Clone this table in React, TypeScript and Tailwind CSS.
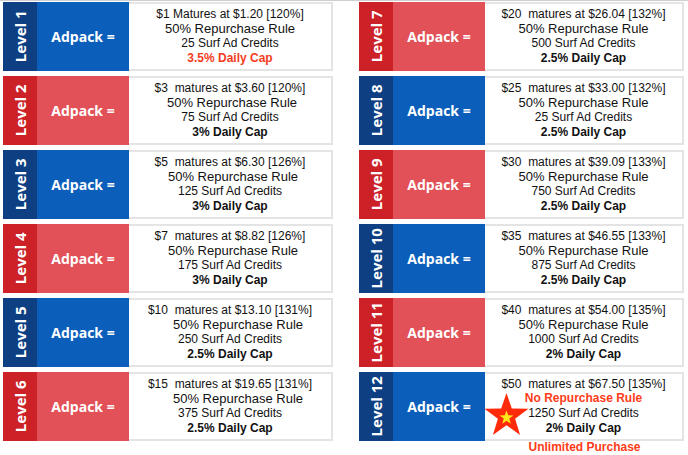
import React from "react";

type Level = {
  level: number;
  price: string;
  rule: string;
  credits: string;
  cap: string;
  capRed?: boolean;
  ruleShift?: string;
};

const left: Level[] = [
  { level: 1, price: "$1 Matures at $1.20 [120%]", rule: "50% Repurchase Rule", credits: "25 Surf Ad Credits", cap: "3.5% Daily Cap", capRed: true },
  { level: 2, price: "$3  matures at $3.60 [120%]", rule: "50% Repurchase Rule", credits: "75 Surf Ad Credits", cap: "3% Daily Cap", ruleShift: "pl-[4px]" },
  { level: 3, price: "$5  matures at $6.30 [126%]", rule: "50% Repurchase Rule", credits: "125 Surf Ad Credits", cap: "3% Daily Cap", ruleShift: "pl-[6px]" },
  { level: 4, price: "$7  matures at $8.82 [126%]", rule: "50% Repurchase Rule", credits: "175 Surf Ad Credits", cap: "3% Daily Cap", ruleShift: "pl-[6px]" },
  { level: 5, price: "$10  matures at $13.10 [131%]", rule: "50% Repurchase Rule", credits: "250 Surf Ad Credits", cap: "2.5% Daily Cap", ruleShift: "pl-[16px]" },
  { level: 6, price: "$15  matures at $19.65 [131%]", rule: "50% Repurchase Rule", credits: "375 Surf Ad Credits", cap: "2.5% Daily Cap", ruleShift: "pl-[16px]" },
];

const right: Level[] = [
  { level: 7, price: "$20  matures at $26.04 [132%]", rule: "50% Repurchase Rule", credits: "500 Surf Ad Credits", cap: "2.5% Daily Cap" },
  { level: 8, price: "$25  matures at $33.00 [132%]", rule: "50% Repurchase Rule", credits: "25 Surf Ad Credits", cap: "2.5% Daily Cap" },
  { level: 9, price: "$30  matures at $39.09 [133%]", rule: "50% Repurchase Rule", credits: "750 Surf Ad Credits", cap: "2.5% Daily Cap" },
  { level: 10, price: "$35  matures at $46.55 [133%]", rule: "50% Repurchase Rule", credits: "875 Surf Ad Credits", cap: "2.5% Daily Cap" },
  { level: 11, price: "$40  matures at $54.00 [135%]", rule: "50% Repurchase Rule", credits: "1000 Surf Ad Credits", cap: "2% Daily Cap" },
];

const Star = () => (
  <svg className="absolute left-[-1px] top-[19px]" width="45" height="43" viewBox="0 0 44 42">
    <polygon
      points="22,0 27.2,15.2 43.5,15.4 30.4,25.2 35.3,41 22,31.4 8.7,41 13.6,25.2 0.5,15.4 16.8,15.2"
      fill="#ff2a0a"
    />
    <polygon
      points="22,17 23.7,21.8 28.8,21.9 24.7,25 26.2,30 22,27 17.8,30 19.3,25 15.2,21.9 20.3,21.8"
      fill="#ffe81a"
    />
  </svg>
);

const Card = ({ item, blue, last }: { item: Level; blue: boolean; last?: boolean }) => (
  <div className="flex h-[69px]">
    <div
      className={`flex w-[34px] shrink-0 items-center justify-center ${blue ? "bg-[#0d3f82]" : "bg-[#cd2128]"}`}
    >
      <span className="-rotate-90 whitespace-nowrap font-['Open_Sans',sans-serif] text-[15px] font-bold text-white">
        Level {item.level}
      </span>
    </div>
    <div
      className={`flex w-[92px] shrink-0 items-center justify-center font-['Open_Sans',sans-serif] text-[14px] font-bold text-white ${blue ? "bg-[#0b5eba]" : "bg-[#e25058]"}`}
    >
      Adpack =
    </div>
    <div className="relative flex flex-1 flex-col items-center justify-center border-2 border-l-0 border-[#e4e4e4] bg-white font-['Liberation_Sans',Arial,sans-serif] text-[#111]">
      {last && <Star />}
      <div className="whitespace-pre text-[12px] leading-[14px]">{item.price}</div>
      {last ? (
        <div className="text-[12px] font-bold leading-[15px] text-[#ff3b17]">No Repurchase Rule</div>
      ) : (
        <div className={`text-[13px] leading-[15px] ${item.ruleShift ?? ""}`}>{item.rule}</div>
      )}
      <div className="text-[12px] leading-[15px]">{item.credits}</div>
      <div className={`text-[12px] font-bold leading-[15px] ${item.capRed ? "text-[#f33c1c]" : "text-[#111]"}`}>
        {item.cap}
      </div>
    </div>
  </div>
);

export default function App() {
  return (
    <div className="h-[455px] w-[688px] overflow-hidden border-t border-[#cfcfcf] bg-white">
      <div className="flex gap-[26px] pl-[3px] pr-[4px] pt-[1px]">
        <div className="flex w-[330px] flex-col gap-[5px]">
          {left.map((item, i) => (
            <Card key={item.level} item={item} blue={i % 2 === 0} />
          ))}
        </div>
        <div className="flex w-[325px] flex-col gap-[5px]">
          {right.map((item, i) => (
            <Card key={item.level} item={item} blue={i % 2 === 1} />
          ))}
          <div>
            <Card
              item={{ level: 12, price: "$50  matures at $67.50 [135%]", rule: "", credits: "1250 Surf Ad Credits", cap: "2% Daily Cap" }}
              blue
              last
            />
            <div className="-mt-[1px] pl-[126px] text-center font-['Liberation_Sans',Arial,sans-serif] text-[12px] font-bold leading-[14px] text-[#ff3b17]">
              Unlimited Purchase
            </div>
          </div>
        </div>
      </div>
    </div>
  );
}
